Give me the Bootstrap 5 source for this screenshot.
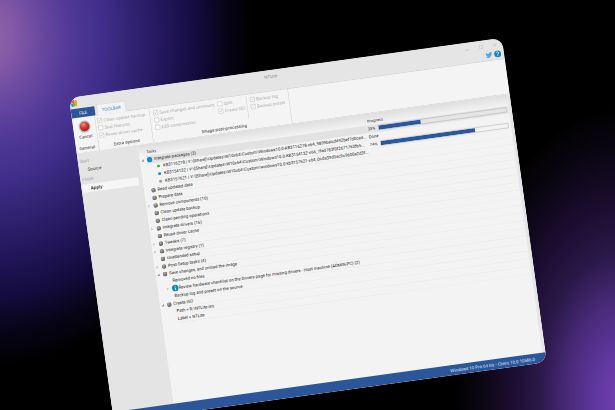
<!DOCTYPE html>
<html lang="en">
<head>
<meta charset="utf-8">
<meta name="viewport" content="width=device-width, initial-scale=1">
<title>NTLite</title>
<link href="https://cdn.jsdelivr.net/npm/bootstrap@5.3.0/dist/css/bootstrap.min.css" rel="stylesheet">
<style>
  body {
    font-family: "Noto Sans", sans-serif;
    font-size: 11px;
    line-height: 19px;
    color: #222;
    background:
      radial-gradient(ellipse 27% 71% at 101% 97%, #7242b2 0%, #6038a0 15%, #482a78 33%, #2a1848 50%, #1c0e32 65%, #0a0612 85%, transparent 100%),
      radial-gradient(ellipse 42% 78% at -2% 9%, #9064a8 0%, #8459a6 10%, #6848a0 21%, #4f3896 33%, #402e8a 45%, #302270 57%, #211558 70%, #130b3c 82%, #080418 92%, transparent 103%);
    background-color: #000;
  }
  .stage { padding: 98px 0 0 69px; }
  /* The window is laid out at desktop size, then shown tilted and reduced as a whole */
  .app-window {
    width: 184.5vw;
    min-height: 850px;
    border-radius: 26px;
    background: #f3f3f3;
    transform-origin: 0 0;
    transform: rotate(-7.9deg) scale(.385);
  }
  .title-area { background: #e5e5e5; border-bottom: 1px solid #c8c8c8; }
  .title-line { height: 30px; padding: 0 12px 0 2px; }
  .title-text { color: #808080; }
  .plain-btn { border: 0; background: none; padding: 0; color: inherit; line-height: 1; }
  .win-btns { gap: 20px; }
  .win-btn { color: #b4b4b4; width: 16px; }
  .tab-line { height: 24px; padding-right: 7px; }
  .tab-btn { border: 0; height: 24px; padding: 0; text-align: center; }
  .tab-file { width: 62px; background: #2b579a; color: #fff; }
  .tab-tools { width: 74px; height: 28px; margin: -3px 0 0 6px; background: #f3f3f3; color: #3578cf; border: 1px solid #ccc; border-bottom: 0; }
  .ribbon { height: 92px; border-bottom: 1px solid #c4c4c4; background: #f4f4f4; }
  .ribbon-group { border-right: 1px solid #c4c4c4; padding-top: 4px; }
  .group-general { width: 60px; }
  .group-extra { width: 142px; padding-left: 5px; }
  .group-post { width: 364px; padding-left: 10px; }
  .post-save { width: 168px; }
  .post-iso { width: 76px; border-right: 1px solid #c4c4c4; }
  .post-backup { padding-left: 9px; }
  .opt { display: flex; align-items: center; gap: 4px; height: 19px; color: #a8a8a8; white-space: nowrap; }
  .opt input { appearance: none; width: 12px; height: 12px; margin: 0; border: 1px solid #a8a8a8; background: #fff; flex: none; }
  .opt input:checked::after { content: ""; display: block; width: 4px; height: 7px; margin-left: 3px; border: solid #999; border-width: 0 1px 1px 0; transform: rotate(40deg); }
  .group-name { color: #222; height: 22px; }
  .side { width: 160px; flex: none; background: #e4e4e4; padding-top: 8px; }
  .side-head { color: #999; height: 24px; padding: 2px 5px; }
  .side-link { display: block; height: 24px; line-height: 22px; padding-left: 23px; margin-right: 9px; color: #222; text-decoration: none; }
  .side-link.current { background: #f6f6f6; border: 1px solid #d4d4d4; color: #111; font-weight: 600; }
  .task-area { border-right: 8px solid #e6e6e6; min-width: 0; background: linear-gradient(#dedede 0, #f3f3f3 30px); }
  .task-table { width: 100%; table-layout: fixed; border-collapse: collapse; font-family: Roboto, sans-serif; font-size: 11px; }
  .task-table col.task-col { width: 61.8%; }
  .task-table th { height: 30px; font-weight: 400; font-family: "Noto Sans", sans-serif; font-size: 10px; vertical-align: bottom; line-height: 20px; }
  .task-table th:first-child { padding-left: 20px; }
  .task-table td { height: 20px; padding: 0; line-height: 19px; }
  .item { display: flex; align-items: center; height: 20px; padding-left: 3px; }
  .item > button, .item > .gap-arrow { width: 15px; flex: none; }
  .item svg { display: block; flex: none; }
  .item-text { flex: 1; min-width: 0; margin-left: 4px; height: 20px; border-bottom: 1px solid #e7e7e7; white-space: nowrap; }
  .item-child { padding-left: 22px; }
  .item-sub { padding-left: 37px; }
  .item-dot { padding-left: 42px; }
  .item-dot .item-text { margin-left: 8px; }
  .prog-cell { border-bottom: 1px solid #e7e7e7; }
  .prog-num { width: 28px; font-family: "Noto Sans", sans-serif; font-size: 10px; }
  .bar-frame { height: 13px; border: 1px solid #999; border-radius: 0; background: transparent; margin-right: 6px; }
  .bar-frame .progress-bar { background: #2b57a0; }
  .row-now td { background: #e5e5e5; }
  .row-now td:first-child { background: linear-gradient(90deg, #f3f3f3 18px, #e2e2e2 18px); }
  .status { height: 26px; background: #2b579a; color: #e8effa; padding-right: 29px; border-radius: 0 0 26px 26px; }
  .side-wrap { background: linear-gradient(90deg, #e4e4e4 160px, #f3f3f3 160px); }
</style>
<script src="https://cdn.jsdelivr.net/npm/bootstrap@5.3.0/dist/js/bootstrap.bundle.min.js"></script>
</head>
<body class="vh-100 overflow-hidden">
<svg class="position-absolute" width="0" height="0" aria-hidden="true">
  <defs>
    <radialGradient id="grey" cx=".4" cy=".3" r=".7"><stop offset="0" stop-color="#aaa"/><stop offset="1" stop-color="#5c5c5c"/></radialGradient>
    <radialGradient id="red" cx=".4" cy=".25" r=".75"><stop offset="0" stop-color="#f58a80"/><stop offset=".5" stop-color="#d93a33"/><stop offset="1" stop-color="#a81c1c"/></radialGradient>
  </defs>
  <symbol id="ball" viewBox="0 0 12 12"><circle cx="6" cy="6" r="5.6" fill="url(#grey)"/></symbol>
  <symbol id="shut" viewBox="0 0 8 8"><path d="M2 1 6 4 2 7Z" fill="none" stroke="#aaa"/></symbol>
  <symbol id="open" viewBox="0 0 8 8"><path d="M7 1v6H1Z" fill="#777"/></symbol>
</svg>
<main class="stage vh-100 overflow-hidden">
  <div class="app-window d-flex flex-column overflow-hidden">
    <header class="title-area">
      <div class="title-line d-flex align-items-center">
        <svg width="17" height="20" viewBox="0 0 17 20" aria-hidden="true"><path d="M4 3 10 1V10H1Q1 6 4 3Z" fill="#e8582c"/><path d="M11 2 17 3V18H11Z" fill="#e9a21f"/><path d="M1 11H6V19H2Z" fill="#2b8fd8"/><path d="M6 8H11V19H6Z" fill="#74b52c"/></svg>
        <div class="title-text flex-fill text-center">NTLite</div>
        <div class="win-btns d-flex align-items-center">
          <button class="plain-btn win-btn" aria-label="Minimize"><svg width="9" height="9"><path d="M0 7h8" stroke="currentColor" stroke-width="2"/></svg></button>
          <button class="plain-btn win-btn" aria-label="Maximize"><svg width="11" height="11"><path d="M1 1h9v9H1Z" fill="none" stroke="currentColor"/></svg></button>
          <button class="plain-btn win-btn" aria-label="Close"><svg width="11" height="11"><path d="M1 1 10 10M10 1 1 10" stroke="currentColor"/></svg></button>
        </div>
      </div>
      <div class="tab-line d-flex">
        <button class="tab-btn tab-file">FILE</button>
        <button class="tab-btn tab-tools">TOOLBAR</button>
        <div class="ms-auto d-flex gap-1 align-items-start">
          <a href="#" aria-label="Twitter"><svg class="d-block" width="18" height="18" viewBox="0 0 16 16" fill="#4fa8e8"><path d="M5 15c6 0 9.300-5 9.300-9.300v-.4A6.700 6.700 0 0 0 16 3.500a6.500 6.500 0 0 1-1.900.5 3.300 3.300 0 0 0 1.400-1.800 6.500 6.500 0 0 1-2.100.8 3.300 3.300 0 0 0-5.600 3A9.300 9.300 0 0 1 1.100 2.500a3.300 3.300 0 0 0 1 4.400 3.300 3.300 0 0 1-1.500-.4 3.300 3.300 0 0 0 2.600 3.200 3.300 3.300 0 0 1-1.500.1 3.300 3.300 0 0 0 3.100 2.300A6.600 6.600 0 0 1 0 13.500 9.300 9.300 0 0 0 5 15"/></svg></a>
          <button class="plain-btn" aria-label="Help"><svg class="d-block" width="19" height="19" viewBox="0 0 19 19"><circle cx="9.500" cy="9.500" r="9" fill="#1686b8"/><path d="M6.500 7a3 3 0 1 1 4.500 2.600q-1.500.8-1.500 2.400M9.500 13.500v2" fill="none" stroke="#fff" stroke-width="2"/></svg></button>
        </div>
      </div>
    </header>

    <div class="ribbon d-flex">
      <section class="ribbon-group group-general d-flex flex-column align-items-center">
        <button class="plain-btn text-center">
          <svg class="d-block mx-auto mt-1" width="32" height="32" viewBox="0 0 32 32" aria-hidden="true"><circle cx="16" cy="16" r="15" fill="#d0d0d0" stroke="#999"/><circle cx="16" cy="16" r="12" fill="url(#red)" stroke="#8d3333"/></svg>
          <span class="d-block pt-1">Cancel</span>
        </button>
        <div class="group-name mt-auto">General</div>
      </section>
      <section class="ribbon-group group-extra d-flex flex-column">
        <label class="opt"><input type="checkbox" checked disabled>Clean update backup</label>
        <label class="opt"><input type="checkbox" disabled>Seal features</label>
        <label class="opt"><input type="checkbox" checked disabled>Reuse driver cache</label>
        <div class="group-name mt-auto text-center">Extra options</div>
      </section>
      <section class="ribbon-group group-post d-flex flex-column">
        <div class="d-flex">
          <div class="post-save">
            <label class="opt"><input type="checkbox" checked disabled>Save changes and unmount</label>
            <label class="opt"><input type="checkbox" disabled>Export</label>
            <label class="opt"><input type="checkbox" disabled>ESD compression</label>
          </div>
          <div class="post-iso">
            <label class="opt"><input type="checkbox" disabled>Split</label>
            <label class="opt"><input type="checkbox" checked disabled>Create ISO</label>
          </div>
          <div class="post-backup">
            <label class="opt"><input type="checkbox" checked disabled>Backup log</label>
            <label class="opt"><input type="checkbox" checked disabled>Backup preset</label>
          </div>
        </div>
        <div class="group-name mt-auto text-center">Image post-processing</div>
      </section>
    </div>

    <div class="side-wrap d-flex flex-fill">
      <nav class="side">
        <div class="side-head">Start</div>
        <a class="side-link" href="#">Source</a>
        <div class="side-head">Finish</div>
        <a class="side-link current" href="#">Apply</a>
      </nav>
      <div class="task-area flex-fill">
        <table class="task-table">
          <colgroup><col class="task-col"><col></colgroup>
          <thead><tr><th>Tasks</th><th>Progress</th></tr></thead>
          <tbody>
            <tr class="row-now"><td><div class="item"><button class="plain-btn" aria-label="Collapse"><svg width="8" height="8"><use href="#open"/></svg></button><svg width="15" height="15"><circle cx="7.500" cy="7.500" r="7" fill="#1a86cc"/></svg><span class="item-text">Integrate packages (3)</span></div></td>
              <td class="prog-cell"><div class="d-flex align-items-center"><span class="prog-num">33%</span><div class="progress bar-frame flex-fill"><div class="progress-bar" style="width:33%"></div></div></div></td></tr>
            <tr><td><div class="item item-dot"><svg width="8" height="8"><circle cx="4" cy="4" r="4" fill="#45b545"/></svg><span class="item-text">KB3116278 | V:\[Share]\Updates\W10x64\Custom\Windows10.0-KB3116278-x64_9899balcd492bef7dbcea...</span></div></td><td class="prog-cell">Done</td></tr>
            <tr><td><div class="item item-dot"><svg width="8" height="8"><circle cx="4" cy="4" r="4" fill="#1d8fd6"/></svg><span class="item-text">KB3154132 | V:\[Share]\Updates\W10x64\Custom\Windows10.0-KB3154132-x64_7fad783f0f2671763fb5...</span></div></td>
              <td class="prog-cell"><div class="d-flex align-items-center"><span class="prog-num">74%</span><div class="progress bar-frame flex-fill"><div class="progress-bar" style="width:74%"></div></div></div></td></tr>
            <tr><td><div class="item item-dot"><svg width="8" height="8"><circle cx="4" cy="4" r="4" fill="#999"/></svg><span class="item-text">KB3157621 | V:\[Share]\Updates\W10x64\Custom\windows10.0-kb3157621-x64_0cda39d9ac9c9600a2d3f...</span></div></td><td class="prog-cell"></td></tr>
            <tr><td><div class="item"><span class="gap-arrow"></span><svg width="13" height="13"><use href="#ball"/></svg><span class="item-text">Read updated data</span></div></td><td class="prog-cell"></td></tr>
            <tr><td><div class="item"><span class="gap-arrow"></span><svg width="13" height="13"><use href="#ball"/></svg><span class="item-text">Prepare data</span></div></td><td class="prog-cell"></td></tr>
            <tr><td><div class="item"><button class="plain-btn" aria-label="Expand"><svg width="8" height="8"><use href="#shut"/></svg></button><svg width="13" height="13"><use href="#ball"/></svg><span class="item-text">Remove components (16)</span></div></td><td class="prog-cell"></td></tr>
            <tr><td><div class="item"><span class="gap-arrow"></span><svg width="13" height="13"><use href="#ball"/></svg><span class="item-text">Clean update backup</span></div></td><td class="prog-cell"></td></tr>
            <tr><td><div class="item"><span class="gap-arrow"></span><svg width="13" height="13"><use href="#ball"/></svg><span class="item-text">Clean pending operations</span></div></td><td class="prog-cell"></td></tr>
            <tr><td><div class="item"><button class="plain-btn" aria-label="Expand"><svg width="8" height="8"><use href="#shut"/></svg></button><svg width="13" height="13"><use href="#ball"/></svg><span class="item-text">Integrate drivers (16)</span></div></td><td class="prog-cell"></td></tr>
            <tr><td><div class="item"><span class="gap-arrow"></span><svg width="13" height="13"><use href="#ball"/></svg><span class="item-text">Reuse driver cache</span></div></td><td class="prog-cell"></td></tr>
            <tr><td><div class="item"><button class="plain-btn" aria-label="Expand"><svg width="8" height="8"><use href="#shut"/></svg></button><svg width="13" height="13"><use href="#ball"/></svg><span class="item-text">Tweaks (7)</span></div></td><td class="prog-cell"></td></tr>
            <tr><td><div class="item"><button class="plain-btn" aria-label="Expand"><svg width="8" height="8"><use href="#shut"/></svg></button><svg width="13" height="13"><use href="#ball"/></svg><span class="item-text">Integrate registry (1)</span></div></td><td class="prog-cell"></td></tr>
            <tr><td><div class="item"><span class="gap-arrow"></span><svg width="13" height="13"><use href="#ball"/></svg><span class="item-text">Unattended setup</span></div></td><td class="prog-cell"></td></tr>
            <tr><td><div class="item"><button class="plain-btn" aria-label="Expand"><svg width="8" height="8"><use href="#shut"/></svg></button><svg width="13" height="13"><use href="#ball"/></svg><span class="item-text">Post-Setup tasks (4)</span></div></td><td class="prog-cell"></td></tr>
            <tr><td><div class="item"><button class="plain-btn" aria-label="Collapse"><svg width="8" height="8"><use href="#open"/></svg></button><svg width="13" height="13"><use href="#ball"/></svg><span class="item-text">Save changes, and unload the image</span></div></td><td class="prog-cell"></td></tr>
            <tr><td><div class="item item-sub"><span class="item-text">Removed no files</span></div></td><td class="prog-cell"></td></tr>
            <tr><td><div class="item item-child"><button class="plain-btn" aria-label="Expand"><svg width="8" height="8"><use href="#shut"/></svg></button><svg width="17" height="18" viewBox="0 0 17 18"><circle cx="8.500" cy="9" r="8.500" fill="#1686b8"/><path d="M8.500 4v2.500M8.500 8v6" stroke="#fff" stroke-width="2"/></svg><span class="item-text ms-0">Review hardware checklist on the Drivers page for missing drivers - Host machine (ADMIN-PC) (2)</span></div></td><td class="prog-cell"></td></tr>
            <tr><td><div class="item item-sub"><span class="item-text">Backup log and preset on the source</span></div></td><td class="prog-cell"></td></tr>
            <tr><td><div class="item"><button class="plain-btn" aria-label="Collapse"><svg width="8" height="8"><use href="#open"/></svg></button><svg width="13" height="13"><use href="#ball"/></svg><span class="item-text">Create ISO</span></div></td><td class="prog-cell"></td></tr>
            <tr><td><div class="item item-sub"><span class="item-text">Path = R:\NTLite.iso</span></div></td><td class="prog-cell"></td></tr>
            <tr><td><div class="item item-sub"><span class="item-text">Label = NTLite</span></div></td><td class="prog-cell"></td></tr>
          </tbody>
        </table>
      </div>
    </div>
    <footer class="status d-flex align-items-center justify-content-end">Windows 10 Pro 64 bit - Client 10.0 10586.0</footer>
  </div>
</main>
</body>
</html>
